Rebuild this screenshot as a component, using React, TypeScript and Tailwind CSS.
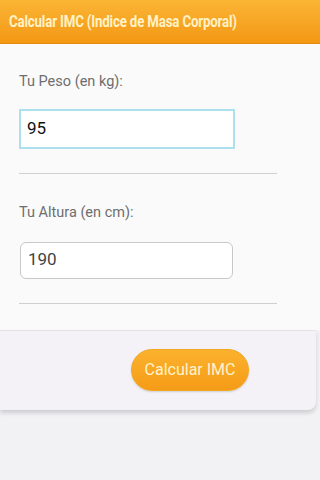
import React from 'react'

export default function App() {
  return (
    <div className="flex h-[480px] w-[320px] flex-col bg-[#f2f1f3] font-['Roboto',sans-serif]">
      {/* Action bar */}
      <div className="flex h-[44px] items-center border-b border-[#e48a0c] bg-gradient-to-b from-[#fbb433] to-[#f39812] pl-[9px]">
        <h1 className="origin-left scale-x-[0.83] whitespace-nowrap text-[16px] font-bold tracking-[-0.2px] text-[#fff2c6]">
          Calcular IMC (Indice de Masa Corporal)
        </h1>
      </div>

      {/* Form */}
      <div className="flex flex-col bg-[#fafafa] px-[19px] pb-[26px] pt-[27px]">
        <label className="text-[14.5px] text-[#6e6e6e]">Tu Peso (en kg):</label>
        <div className="mt-[16px] flex h-[40px] w-[216px] items-center border-2 border-[#aedfee] bg-white pl-[6px] text-[17px] text-[#111]">
          95
        </div>
        <hr className="mt-[24px] w-[258px] border-t border-[#cfcfcf]" />

        <label className="mt-[28px] text-[14.5px] text-[#6e6e6e]">Tu Altura (en cm):</label>
        <div className="mt-[18px] ml-px flex h-[37px] w-[213px] items-center rounded-[6px] border border-[#c8c8c8] bg-white pl-[7px] text-[17px] text-[#444]">
          190
        </div>
        <hr className="mt-[24px] w-[258px] border-t border-[#cfcfcf]" />
      </div>

      {/* Button panel */}
      <div className="mr-[4px] flex h-[80px] items-center rounded-br-[8px] border-t border-[#e6e3e8] bg-[#f4f2f6] pl-[131px] shadow-[0_3px_4px_rgba(0,0,0,0.15)]">
        <button className="h-[42px] w-[118px] rounded-full border border-[#f1a71f] bg-gradient-to-b from-[#fbb22c] to-[#f59b17] text-[16px] text-[#fff3cc] shadow-[0_1px_2px_rgba(0,0,0,0.15)]">
          Calcular IMC
        </button>
      </div>
    </div>
  )
}
